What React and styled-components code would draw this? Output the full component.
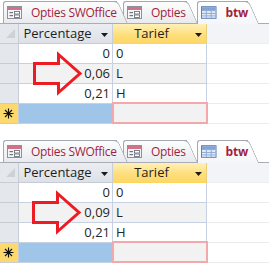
import React from "react"
import styled, { createGlobalStyle } from "styled-components"

const GlobalStyle = createGlobalStyle`
  html, body {
    margin: 0;
    padding: 0;
    background: #fff;
  }
  body {
    font-family: "Open Sans", "Noto Sans", sans-serif;
  }
`

const panels = [
  { rate: "0,06", arrowX: 0 },
  { rate: "0,09", arrowX: -1 },
]

const tabs = [
  { label: "Opties SWOffice", icon: "form", width: 114, offset: 3 },
  { label: "Opties", icon: "form", width: 64, offset: 6 },
  { label: "btw", icon: "table", width: 51, offset: 10, active: true },
]

const FormIcon = () => (
  <svg width="15" height="13" viewBox="0 0 15 13">
    <rect x="0.5" y="0.5" width="14" height="12" fill="#f6f6f6" stroke="#8b9099" />
    <rect x="1" y="1" width="13" height="3" fill="#d2718a" />
    <rect x="2.5" y="6" width="3.5" height="1.2" fill="#6f7580" />
    <rect x="2.5" y="9" width="3.5" height="1.2" fill="#6f7580" />
    <rect x="7.5" y="5.5" width="5" height="2.5" fill="#fff" stroke="#6f7580" strokeWidth="0.9" />
    <rect x="7.5" y="9" width="5" height="2.5" fill="#fff" stroke="#6f7580" strokeWidth="0.9" />
  </svg>
)

const TableIcon = () => (
  <svg width="16" height="13" viewBox="0 0 16 13">
    <rect x="0.5" y="0.5" width="15" height="12" fill="#e3ecf8" stroke="#5c80b6" />
    <rect x="1" y="1" width="14" height="3" fill="#7fa3d6" />
    <path d="M5.5 1v11M10.5 1v11M1 4.5h14M1 7.5h14M1 10h14" stroke="#8fa9d2" strokeWidth="1" />
  </svg>
)

const Triangle = ({ color = "#1b1b1b" }) => (
  <svg width="7" height="4" viewBox="0 0 7 4">
    <path d="M0 0h7L3.5 4z" fill={color} />
  </svg>
)

const Asterisk = () => (
  <svg width="11" height="11" viewBox="0 0 11 11">
    <path d="M5.5 0.5v10M0.5 5.5h10M2 2l7 7M9 2l-7 7" stroke="#111" strokeWidth="1.1" />
  </svg>
)

function Panel({ rate, arrowX }) {
  const rows = [
    { left: "0", right: "0" },
    { left: rate, right: "L", alt: true },
    { left: "0,21", right: "H" },
  ]
  return (
    <PanelWrap>
      <TabBar>
        {tabs.map((t, i) => (
          <Tab
            key={t.label}
            $width={t.width}
            $offset={t.offset}
            $active={t.active}
            $z={t.active ? 10 : 5 - i}
          >
            {t.icon === "form" ? <FormIcon /> : <TableIcon />}
            <TabLabel $active={t.active}>{t.label}</TabLabel>
          </Tab>
        ))}
      </TabBar>
      <Row>
        <SelectAll>
          <svg width="9" height="9" viewBox="0 0 9 9">
            <path d="M9 0v9H0z" fill="#cdd1d8" />
          </svg>
        </SelectAll>
        <HeadCell>
          <HeadText>Percentage</HeadText>
          <DropButton>
            <Triangle />
          </DropButton>
        </HeadCell>
        <HeadCell $active>
          <HeadText>Tarief</HeadText>
          <DropButton>
            <Triangle />
          </DropButton>
        </HeadCell>
        <HeadFiller />
      </Row>
      {rows.map((r, i) => (
        <Row key={i}>
          <Selector />
          <NumCell $alt={r.alt}>{r.left}</NumCell>
          <TextCell $alt={r.alt}>{r.right}</TextCell>
          <Filler />
        </Row>
      ))}
      <Row>
        <Selector $new>
          <Asterisk />
        </Selector>
        <NumCell $selected />
        <TextCell $focused />
        <Filler />
      </Row>
      <ArrowMark $x={arrowX} width="100" height="124" viewBox="0 0 100 124">
        <polygon
          points="34.5,63.5 58.5,63.5 58.5,54.5 80,73.5 58.5,92.5 58.5,83.5 34.5,83.5"
          fill="none"
          stroke="#ed1c24"
          strokeWidth="3"
          strokeLinejoin="miter"
        />
      </ArrowMark>
    </PanelWrap>
  )
}

export default function App() {
  return (
    <Page>
      <GlobalStyle />
      {panels.map((p, i) => (
        <Panel key={i} {...p} />
      ))}
    </Page>
  )
}

const Page = styled.div`
  width: 269px;
  display: flex;
  flex-direction: column;
  gap: 15px;
`

const PanelWrap = styled.div`
  position: relative;
  display: flex;
  flex-direction: column;
`

const TabBar = styled.div`
  height: 23px;
  display: flex;
  align-items: flex-end;
  border-bottom: 1px solid #a7adb6;
  background: #fff;
`

const Tab = styled.div`
  position: relative;
  z-index: ${(p) => p.$z};
  box-sizing: border-box;
  width: ${(p) => p.$width}px;
  margin-left: ${(p) => p.$offset}px;
  height: ${(p) => (p.$active ? 23 : 22)}px;
  margin-bottom: ${(p) => (p.$active ? -1 : 0)}px;
  display: flex;
  align-items: center;
  gap: 9px;
  padding-left: 3px;
  padding-bottom: 1px;
  border: 1px solid #a3a9b2;
  border-right: none;
  border-bottom: none;
  border-top-left-radius: 3px;
  background: ${(p) =>
    p.$active
      ? "linear-gradient(#ffffff, #f5f6f9)"
      : "linear-gradient(#fdfdfd, #e8eaee)"};

  &::after {
    content: "";
    position: absolute;
    z-index: -1;
    top: -1px;
    left: calc(100% - 14px);
    width: 14px;
    height: 100%;
    border-top: 1px solid #a3a9b2;
    border-right: 1px solid #a3a9b2;
    border-top-right-radius: 5px;
    background: inherit;
    transform: skewX(24deg);
    transform-origin: top left;
  }
`

const TabLabel = styled.span`
  font-size: 12px;
  letter-spacing: ${(p) => (p.$active ? "-0.2px" : "-0.3px")};
  font-weight: ${(p) => (p.$active ? 700 : 400)};
  color: #a21f3d;
  white-space: nowrap;
`

const Row = styled.div`
  display: grid;
  grid-template-columns: 19px 94px 94px 1fr;
  height: 20px;
`

const SelectAll = styled.div`
  box-sizing: border-box;
  display: flex;
  align-items: flex-end;
  justify-content: flex-end;
  padding: 0 3px 5px 0;
  background: #e4e7ec;
  border-right: 1px solid #c8cdd5;
  border-bottom: 1px solid #c8cdd5;
`

const HeadCell = styled.div`
  box-sizing: border-box;
  display: flex;
  align-items: center;
  border-right: 1px solid ${(p) => (p.$active ? "#e9cf78" : "#c6cfdd")};
  border-bottom: 1px solid ${(p) => (p.$active ? "#fbd760" : "#c6ccd6")};
  background: ${(p) =>
    p.$active
      ? "linear-gradient(#fff0b8, #fedf7e 55%, #fdd766)"
      : "linear-gradient(#ebedf1, #dde1e7)"};
`

const HeadText = styled.span`
  flex: 1;
  text-align: center;
  font-size: 13px;
  line-height: 19px;
  color: #1e1e1e;
`

const DropButton = styled.span`
  width: 16px;
  display: flex;
  align-items: center;
  justify-content: center;
  padding-top: 2px;
`

const HeadFiller = styled.div`
  background: #f3f4f8;
  border-bottom: 1px solid #eceef3;
`

const Selector = styled.div`
  box-sizing: border-box;
  display: flex;
  align-items: center;
  justify-content: center;
  padding-right: 2px;
  background: ${(p) => (p.$new ? "#fdd86c" : "#e4e7ec")};
  border-right: 1px solid #c8cdd5;
  border-bottom: 1px solid #c8cdd5;
`

const Cell = styled.div`
  box-sizing: border-box;
  font-size: 13px;
  line-height: 19px;
  color: #262626;
  border-right: 1px solid #c6d1e4;
  border-bottom: 1px solid #c6d1e4;
  background: ${(p) => (p.$selected ? "#9fc5e8" : p.$alt || p.$focused ? "#f2f2f2" : "#fff")};
`

const NumCell = styled(Cell)`
  text-align: right;
  padding-right: 2px;
`

const TextCell = styled(Cell)`
  position: relative;
  padding-left: 3px;

  ${(p) =>
    p.$focused &&
    `
    &::after {
      content: "";
      position: absolute;
      top: -2px;
      left: -1px;
      right: -2px;
      bottom: -1px;
      border: 2px solid #f4a8ac;
    }
  `}
`

const Filler = styled.div`
  background: #fff;
  border-bottom: 1px solid #ececec;
`

const ArrowMark = styled.svg`
  position: absolute;
  top: 0;
  left: ${(p) => p.$x}px;
  pointer-events: none;
`
